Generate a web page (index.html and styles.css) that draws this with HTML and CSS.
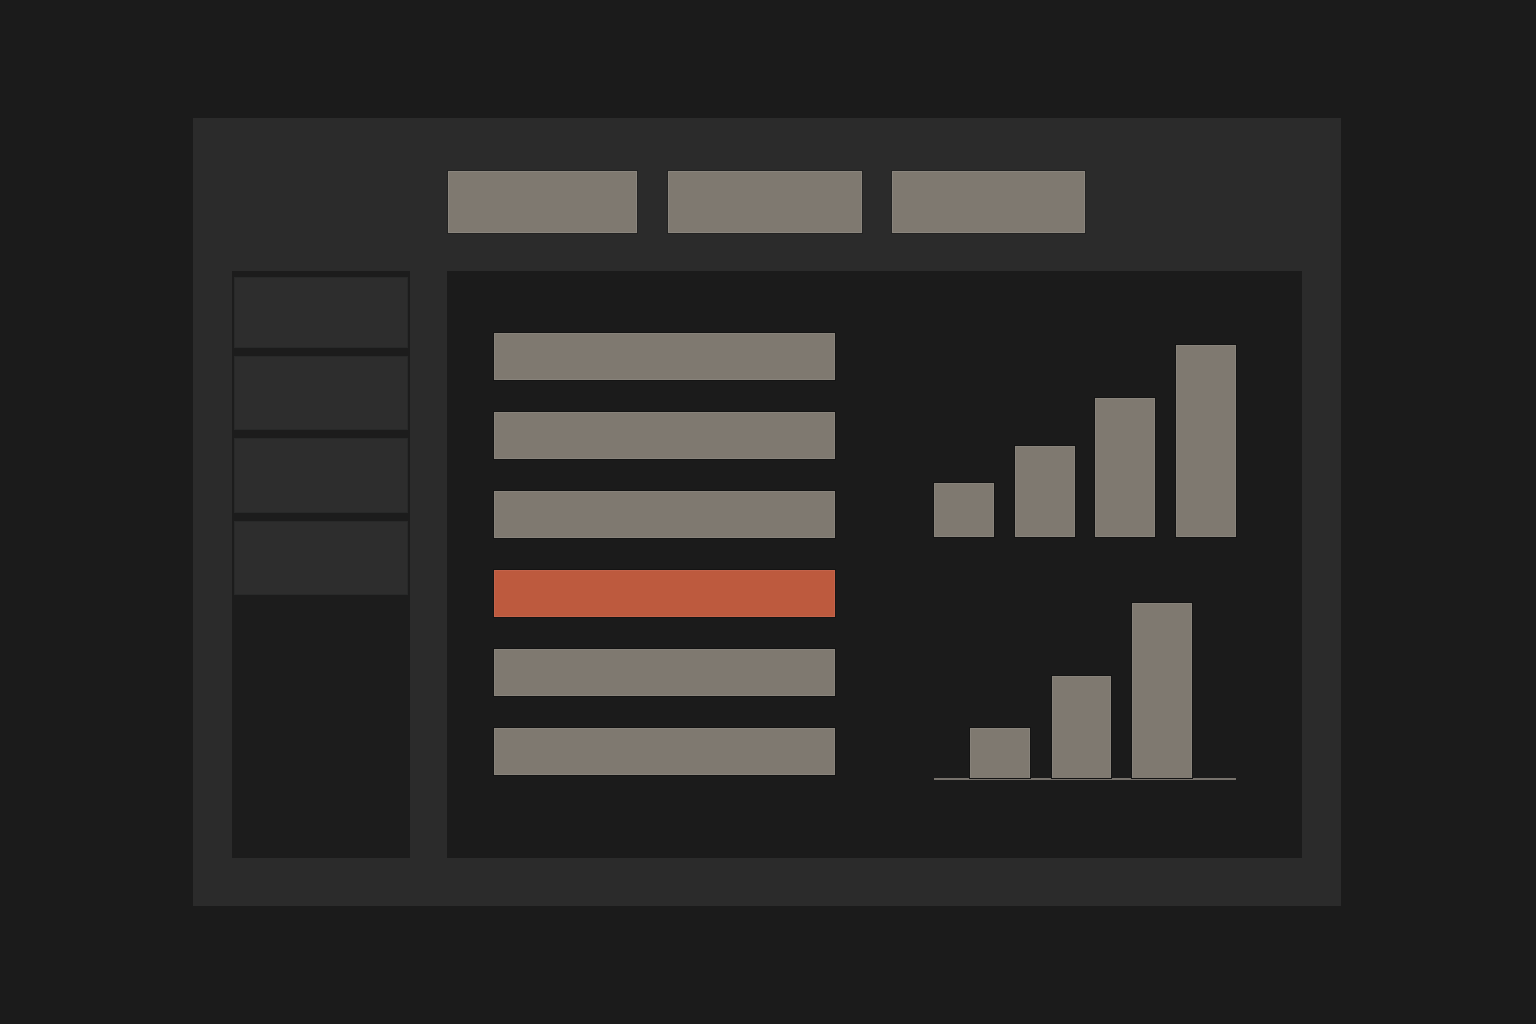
FILE: index.html
```html
<!DOCTYPE html>
<html lang="en">
<head>
<meta charset="utf-8">
<title>Dashboard wireframe</title>
<link rel="stylesheet" href="styles.css">
</head>
<body>
<div class="stage">
  <div class="panel">
    <div class="tabs">
      <div class="tab tab-1"></div>
      <div class="tab tab-2"></div>
      <div class="tab tab-3"></div>
    </div>
    <div class="body">
      <aside class="sidebar">
        <div class="side-item"></div>
        <div class="side-item"></div>
        <div class="side-item"></div>
        <div class="side-item"></div>
      </aside>
      <main class="content">
        <div class="list">
          <div class="row"></div>
          <div class="row"></div>
          <div class="row"></div>
          <div class="row row-active"></div>
          <div class="row"></div>
          <div class="row"></div>
        </div>
        <div class="charts">
          <div class="chart chart-top">
            <div class="bar" style="height:54px"></div>
            <div class="bar" style="height:91px"></div>
            <div class="bar" style="height:139px"></div>
            <div class="bar" style="height:192px"></div>
          </div>
          <div class="chart chart-bottom">
            <div class="bar bar-b1" style="height:50px"></div>
            <div class="bar bar-b2" style="height:102px"></div>
            <div class="bar bar-b3" style="height:175px"></div>
          </div>
        </div>
      </main>
    </div>
  </div>
</div>
</body>
</html>
```

FILE: styles.css
```css
html, body {
  margin: 0;
  padding: 0;
  background: #1b1b1b;
  font-family: "Liberation Sans", Arial, sans-serif;
}

.stage {
  width: 1536px;
  height: 1024px;
  padding: 118px 0 0 193px;
  box-sizing: border-box;
}

.panel {
  width: 1148px;
  height: 788px;
  box-sizing: border-box;
  background: #2b2b2b;
  padding: 53px 39px 48px 39px;
}

.tabs {
  display: flex;
  height: 62px;
  margin-left: 216px;
  margin-bottom: 38px;
}

.tab {
  height: 62px;
  box-sizing: border-box;
  background: #7f7970;
  border: 1px solid #8a857d;
  box-shadow: 0 0 0 1px #232323;
}
.tab-1 { width: 189px; }
.tab-2 { width: 194px; margin-left: 31px; }
.tab-3 { width: 193px; margin-left: 30px; }

.body {
  display: flex;
  gap: 37px;
  height: 587px;
}

.sidebar {
  width: 178px;
  height: 587px;
  box-sizing: border-box;
  background: #1c1c1c;
  padding: 6px 2px 0 2px;
  display: flex;
  flex-direction: column;
  gap: 8px;
}

.side-item {
  background: #2d2d2d;
  box-shadow: inset 0 0 0 1px #282929;
}
.side-item:nth-child(1) { height: 71px; }
.side-item:nth-child(2) { height: 74px; }
.side-item:nth-child(3) { height: 75px; }
.side-item:nth-child(4) { height: 74px; }

.content {
  width: 855px;
  height: 587px;
  box-sizing: border-box;
  background: #1b1b1b;
  padding: 62px 0 0 47px;
  display: flex;
}

.list {
  width: 341px;
  display: flex;
  flex-direction: column;
  gap: 32px;
}

.row {
  height: 47px;
  box-sizing: border-box;
  background: #7f7970;
  border: 1px solid #88837b;
  box-shadow: 0 0 0 1px #141414;
}
.row-active {
  background: #bd5a3e;
  border-color: #c4634a;
}

.charts {
  width: 302px;
  margin-left: 99px;
  display: flex;
  flex-direction: column;
}

.chart {
  display: flex;
  align-items: flex-end;
}

.chart-top {
  height: 204px;
  justify-content: space-between;
}

.chart-bottom {
  height: 241px;
  border-bottom: 2px solid #77726c;
  padding-left: 36px;
}

.bar {
  width: 60px;
  box-sizing: border-box;
  background: #7f7970;
  border: 1px solid #88837b;
  border-bottom: none;
  box-shadow: 0 0 0 1px #141414;
}
.chart-top .bar { border-bottom: 1px solid #88837b; }

.bar-b1 { width: 60px; }
.bar-b2 { width: 59px; margin-left: 22px; }
.bar-b3 { width: 60px; margin-left: 21px; }
```
